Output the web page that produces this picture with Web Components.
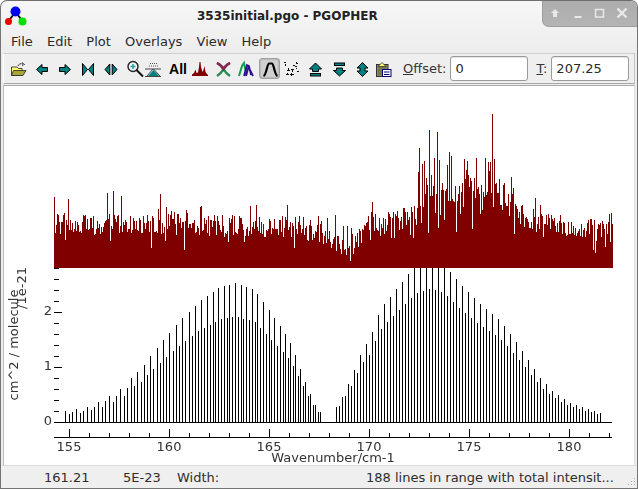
<!DOCTYPE html>
<html><head><meta charset="utf-8"><title>PGOPHER</title>
<style>
html,body{margin:0;padding:0;background:#fff;width:638px;height:489px;overflow:hidden}
body{font:13px "DejaVu Sans",sans-serif;color:#2e2e2e}
</style></head><body>
<app-window>
  <title-bar>3535initial.pgo - PGOPHER</title-bar>
  <menu-bar><span>File</span><span>Edit</span><span>Plot</span><span>Overlays</span><span>View</span><span>Help</span></menu-bar>
  <tool-bar>
    <tool-btn kind="open" w="25"></tool-btn><tool-btn kind="left" w="23"></tool-btn><tool-btn kind="right" w="23"></tool-btn><tool-btn kind="bow" w="23"></tool-btn><tool-btn kind="diamond" w="23"></tool-btn><tool-btn kind="zoom" w="22" pad="4"></tool-btn><tool-btn kind="peak" w="18"></tool-btn><tool-btn kind="all" w="28" pad="4"></tool-btn><tool-btn kind="spec" w="20"></tool-btn><tool-btn kind="x" w="25"></tool-btn><tool-btn kind="m" w="22"></tool-btn><tool-btn kind="gauss" w="21" active></tool-btn><tool-btn kind="dots" w="22" rp="2"></tool-btn><tool-btn kind="up" w="24"></tool-btn><tool-btn kind="down" w="23"></tool-btn><tool-btn kind="updown" w="23"></tool-btn><tool-btn kind="clip" w="22" rp="2"></tool-btn>
    <num-field label="Offset:" key="O" value="0" w="78" gap="4" ml="8"></num-field>
    <num-field label="T:" key="T" value="207.25" w="78" gap="4" ml="8"></num-field>
  </tool-bar>
  <spectrum-plot></spectrum-plot>
  <status-bar><span style="width:43px"></span><span style="width:79px">161.21</span><span style="width:54px">5E-23</span><span style="width:189px">Width:</span><span>188 lines in range with total intensit...</span></status-bar>
</app-window>
<script>
function def(name,css,html,init){
  customElements.define(name,class extends HTMLElement{
    constructor(){super();const r=this.attachShadow({mode:'open'});r.innerHTML='<style>'+css+'</style>'+(typeof html==='function'?html(this):html);}
    connectedCallback(){if(init)init(this);}
  });
}
def('app-window',`:host{display:flex;flex-direction:column;box-sizing:border-box;width:638px;height:489px;border:1px solid #747474;border-top-color:#6e6e6e;border-radius:7px 7px 0 0;overflow:hidden;background:linear-gradient(#f7f7f7 0,#ececec 56px,#ededed 56px);}`,`<slot></slot>`);
def('title-bar',`:host{display:flex;height:28px;flex:none;position:relative;font-weight:bold;color:#222;font-size:12px;line-height:30px}
.logo{width:196px;flex:none}.t{flex:1}
svg{display:block}
.btns{position:absolute;right:0;top:-1px;width:95px;height:27px;border-radius:0 0 0 7px;background:linear-gradient(#adadad,#b4b4b4);box-sizing:border-box;border-left:1px solid #9c9c9c;border-bottom:1px solid #9c9c9c;display:flex;align-items:center;padding:0 0 0 5px;gap:7px}`,
`<div class="logo"><svg width="36" height="28"><path d="M14.5 11 7.5 20M14.5 11 21.5 20" stroke="#111" stroke-width="2"/><circle cx="14.5" cy="10.5" r="5" fill="#0000f0"/><circle cx="7.5" cy="20.5" r="3.5" fill="#f00000"/><circle cx="21.5" cy="20.5" r="4" fill="#00e000"/></svg></div><div class="t"><slot></slot></div>
<div class="btns"><svg width="14" height="14" viewBox="0 0 14 14"><path d="M7 3 11 7H9V11H5V7H3Z" fill="#e8e8e8"/></svg><svg width="14" height="14" viewBox="0 0 14 14" style="margin-left:3px"><rect x="2.5" y="10" width="7" height="2" fill="#e8e8e8"/></svg><svg width="14" height="14" viewBox="0 0 14 14"><path d="M2.5 3.5H10.5V11H2.5Z" fill="none" stroke="#e8e8e8" stroke-width="1.5"/></svg><svg width="14" height="14" viewBox="0 0 14 14" style="margin-left:1px"><path d="M2.5 2.5 11.5 11.5M11.5 2.5 2.5 11.5" stroke="#e8e8e8" stroke-width="2.4"/></svg></div>`);
def('menu-bar',`:host{display:flex;gap:14.2px;height:24px;flex:none;align-items:center;padding:0 0 0 10px;font-size:13px;color:#2a2a2a;box-sizing:border-box}`,`<slot></slot>`);
def('tool-bar',`:host{display:flex;align-items:center;flex:none;height:31px;box-sizing:border-box;margin:0 2px;padding:0 0 0 1px;background:#efefef;border:1px solid #c4c4c4;border-bottom-color:#a8a8a8;border-left-color:#fff;border-top-color:#cfcfcf}`,`<slot></slot>`);
const T='#008080',K='#000';
const tp=`fill="${T}" stroke="${K}" stroke-width="1"`;
const ICONS={
open:`<path d="M1.5 6H7L8.5 7.5H12V14.5H1.5Z" fill="#ffff70" stroke="#333" stroke-width=".9"/><path d="M3.5 9.5H16L13 14.5H1.5Z" fill="#a8a830" stroke="#333" stroke-width=".9"/><path d="M8 5C9 2.5 11.5 2 14 3.5M12.5 1.5 14.5 3.5 12 4.5" fill="none" stroke="#222" stroke-width="1" stroke-dasharray="1.6 .6"/>`,
left:`<path d="M8 3.5V6.5H13.5V10.5H8V13.5L2.5 8.5Z" ${tp}/>`,
right:`<path d="M8 3.5V6.5H2.5V10.5H8V13.5L13.5 8.5Z" ${tp}/>`,
bow:`<path d="M2.5 2.5 7.5 8.5 2.5 14.5ZM13.5 2.5 8.5 8.5 13.5 14.5Z" ${tp}/>`,
diamond:`<path d="M6.8 3 2 8.5 6.8 14ZM9.2 3 14 8.5 9.2 14Z" ${tp}/>`,
zoom:`<circle cx="6" cy="5.5" r="5" fill="#e8f8f8" stroke="#222" stroke-width="1.4"/><path d="M3.5 5.5H8.5M6 3V8" stroke="#30a0a0" stroke-width="1.6"/><path d="M9.5 9 16 15.5" stroke="#111" stroke-width="2"/>`,
peak:`<path d="M0 8H16" stroke="#444" stroke-width="1"/><path d="M5 2.5H12M4 5H13" stroke="#555" stroke-width="1" stroke-dasharray="1 1"/><path d="M8 8 2 15" stroke="#444"/><path d="M8.5 8 15 15" stroke="#444"/><path d="M8.5 9 14 15H3Z" fill="${T}"/><path d="M0 15.5H16" stroke="#444"/>`,
spec:`<path d="M0 15V13.5L2 12 3.5 8.5 4.5 12 6 11.5 7 6 7.5 1 8.5 1 9 6 10.5 11 11.5 9 12.5 5 13.5 11 15 13 16 14V15Z" fill="#800000"/>`,
x:`<path d="M2 2C6 4 7 5 8.5 8 7 11 5 13 2 15" fill="none" stroke="#2e8b57" stroke-width="2.4"/><path d="M15 2C11 4 10 5 8.5 8 10 11 12 13 15 15" fill="none" stroke="#2e8b57" stroke-width="2.4"/><path d="M2 2C6 4 7 5 8.5 8 10 5 11 4 15 2" fill="none" stroke="#8b2252" stroke-width="2.4"/>`,
m:`<path d="M1 15 4 5 6 2 8.5 14" fill="none" stroke="#10a050" stroke-width="2"/><path d="M6 15 9 4 11 5 13 14M8 15 10.5 6 15 15" fill="none" stroke="#301090" stroke-width="1.8"/>`,
gauss:`<path d="M1.5 15C4.5 14 5 3 7 2.5H10C12 3 12.5 14 15.5 15" fill="none" stroke="#000" stroke-width="2.2"/>`,
dots:`<path d="M1 1h2v1h-2zM2 3h1v2h-1zM13 1h1v1h1v1h-2zM10 4h2v1h-2zM5 7h1v2h1v1h-3v-1h1zM8 8h3v1h-1v2h-1v-2h-1zM4 12h1v1h1v1h-3v-1h1zM8 12h1v1h2v1h-2v1h-1v-1h-1v-1h1zM13 7h1v1h-1zM14 10h2v1h-2zM12 5h2v1h-2z" fill="#111"/>`,
up:`<path d="M8.5 2 14.5 8H11.5V10.5H5.5V8H2.5Z" ${tp}/><rect x="3.5" y="12.5" width="10" height="2.5" ${tp}/>`,
down:`<rect x="3.5" y="2" width="10" height="2.5" ${tp}/><path d="M8.5 15 14.5 9.5H11.5V7H5.5V9.5H2.5Z" ${tp}/>`,
updown:`<path d="M8.5 1.5 14 7H11V10H14L8.5 15.5 3 10H6V7H3Z" ${tp}/>`,
clip:`<rect x="1.5" y="3.5" width="11.5" height="12" fill="#8a8a50" stroke="#333"/><path d="M3 5H11V14H3Z" fill="#6e6e40" opacity=".6"/><path d="M4.5 4 7 1.5 9.5 4 11 5.5H3Z" fill="#ffff80" stroke="#333" stroke-width=".8"/><rect x="7.5" y="8.5" width="8.5" height="7" fill="#fff" stroke="#000080" stroke-width="1"/><path d="M9 11H14.5M9 13.5H14.5" stroke="#000080" stroke-width="1.2"/>`
};
def('tool-btn',`:host{display:flex;align-items:center;justify-content:center;height:25px;flex:none;box-sizing:border-box;font:bold 14px "Liberation Sans",sans-serif;color:#000}
:host([active]){background:#d0d0d0;border:1px solid #a0a0a0;border-radius:3px;box-shadow:inset 0 0 2px #888;height:21px;margin:0 1px 0 2px}
svg{display:block;overflow:visible;flex:none}`,
h=>h.getAttribute('kind')==='all'?`<span>All</span>`:`<svg width="16" height="16" viewBox="0 0 16 16">${ICONS[h.getAttribute('kind')]}</svg>`,
h=>{h.style.width=h.getAttribute('w')+'px';if(h.getAttribute('pad'))h.style.paddingLeft=h.getAttribute('pad')+'px';if(h.getAttribute('rp'))h.style.paddingRight=h.getAttribute('rp')+'px';});
def('num-field',`:host{display:flex;align-items:center;flex:none;font-size:13px;color:#333}
u{text-decoration:underline}
.box{box-sizing:border-box;height:25px;background:#fff;border:1px solid #9a9a9a;border-radius:3px;padding:0 4px;line-height:23px;color:#2a2a2a;box-shadow:inset 0 1px 1px #e4e4e4}`,
h=>{const l=h.getAttribute('label'),k=h.getAttribute('key');return `<span><u>${k}</u>${l.slice(1)}</span><div class="box" style="width:${h.getAttribute('w')}px;margin-left:${h.getAttribute('gap')}px">${h.getAttribute('value')}</div>`},
h=>{h.style.marginLeft=h.getAttribute('ml')+'px';});
def('status-bar',`:host{display:flex;align-items:center;flex:none;height:23px;box-sizing:border-box;background:#efefef;font-size:13px;color:#2e2e2e;position:relative;white-space:pre;border-top:1px solid #dcdcdc}
svg{position:absolute;right:1px;bottom:1px}`,
`<slot></slot><svg width="10" height="10"><path d="M8 1h1v1h-1zM5 4h1v1h-1zM8 4h1v1h-1zM2 7h1v1h-1zM5 7h1v1h-1zM8 7h1v1h-1z" fill="#aaa"/></svg>`);
def('spectrum-plot',`:host{display:block;position:relative;flex:1;margin:1px 2px 0 2px;background:#fff;border-left:1px solid #bbb;border-top:1px solid #aaa;border-right:1px solid #ddd;overflow:hidden;font-size:13px;color:#333;min-height:0}
canvas{position:absolute;left:0;top:0}
.l{position:absolute;white-space:nowrap;line-height:16px;transform:translate(-50%,-50%)}
.r{position:absolute;white-space:nowrap;line-height:16px;transform:translate(-50%,-50%) rotate(-90deg)}`,
`<canvas width="638" height="400"></canvas>
<span class="l" style="left:65px;top:361px">155</span><span class="l" style="left:165px;top:361px">160</span><span class="l" style="left:265px;top:361px">165</span><span class="l" style="left:365px;top:361px">170</span><span class="l" style="left:465px;top:361px">175</span><span class="l" style="left:565px;top:361px">180</span>
<span class="l" style="left:329px;top:372px">Wavenumber/cm-1</span>
<span class="l" style="left:44px;top:225px">2</span><span class="l" style="left:44px;top:280px">1</span><span class="l" style="left:44px;top:335px">0</span>
<span class="r" style="left:10px;top:259px">cm^2 / molecule</span><span class="r" style="left:18px;top:202px">/1e-21</span>`,
h=>{
  const OX=4,OY=86;
  const c=h.shadowRoot.querySelector('canvas').getContext('2d');
  let s=12345;const R=()=>{s=(s*1664525+1013904223)>>>0;return s/4294967296;};
  const lerp=(t,x)=>{if(x<=t[0][0])return t[0][1];for(let i=1;i<t.length;i++){if(x<=t[i][0]){const a=t[i-1],b=t[i];return a[1]+(b[1]-a[1])*(x-a[0])/(b[0]-a[0]);}}return t[t.length-1][1];};
  const pts=[[54,224],[200,225],[300,227],[330,238],[342,246],[358,238],[375,226],[400,221],[415,208],[430,190],[445,196],[470,190],[490,188],[505,198],[520,215],[540,222],[570,225],[612,233]];
  const fixed={492:114,429:130,437:132,419:148,422:164,424:161,447:165,449:152,451:156,434:158,439:160,464:159,467:161,485:158,488:162,494:159,511:177,391:238,394:238,399:230,413:238,428:233,438:228,456:232,472:229,113:191,68:199,121:196,160:194,200:207,250:206,287:205,440:215,444:220,500:205};
  c.fillStyle='#800000';
  for(let x=54;x<=612;x++){
    const ty=lerp(pts,x),amp=ty<210?34:22;
    let y=ty+(R()-0.5)*amp;
    if(R()<.1)y-=10+R()*12;
    if(R()<.07)y+=8+R()*8;
    if(fixed[x])y=fixed[x];
    y=Math.round(y);
    c.fillRect(x-OX,y-OY,1,268-y);
  }
  c.fillStyle='#000';
  const base=422;
  const line=(x,v)=>{const y=Math.max(268,Math.round(base-v*55));c.fillRect(Math.round(x)-OX,y-OY,1,base-y);};
  const LB=[[65,.2],[85,.25],[100,.38],[120,.6],[140,.95],[160,1.42],[180,1.85],[200,2.2],[220,2.45],[235,2.52],[255,2.4],[270,2],[280,1.75],[291,1.42],[296,1.18],[301,.93],[306,.69],[311,.47],[315,.31],[320,.18]];
  for(let x=65,i=0;x<321;i++){
    const e=lerp(LB,x);
    if(x<130){line(x,e*[1,.7,.85][i%3]);x+=3.67;}
    else{line(x,e*(i%2?.76:1));x+=x<200?3.2:(x<280?2.8:2.5);}
  }
  const RB=[[336,.27],[343,.49],[350,.76],[356,1.05],[363,1.33],[369,1.49],[380,2.05],[400,2.5],[415,2.85],[430,2.95],[445,2.85],[460,2.5],[480,2.15],[500,1.85],[520,1.35],[541,.78],[553,.55],[568,.36],[590,.22],[602,.16]];
  for(let x=336,i=0;x<603;x+=3,i++){
    line(x,lerp(RB,x)*(i%2?.82:1));
  }
  c.fillRect(54-OX,422-OY,558,1);
  for(let i=0;i<=14;i++){const y=Math.round(422-i*11);const maj=i%5==0;c.fillRect(54-OX,y-OY,maj?8:5,1);}
  c.fillRect(54-OX,437-OY,558,1);
  for(let x=69,i=0;x<=612;x+=20,i++){const maj=i%5==0;c.fillRect(x-OX,(maj?429:433)-OY,1,maj?8:4);}
});
</script>
</body></html>
